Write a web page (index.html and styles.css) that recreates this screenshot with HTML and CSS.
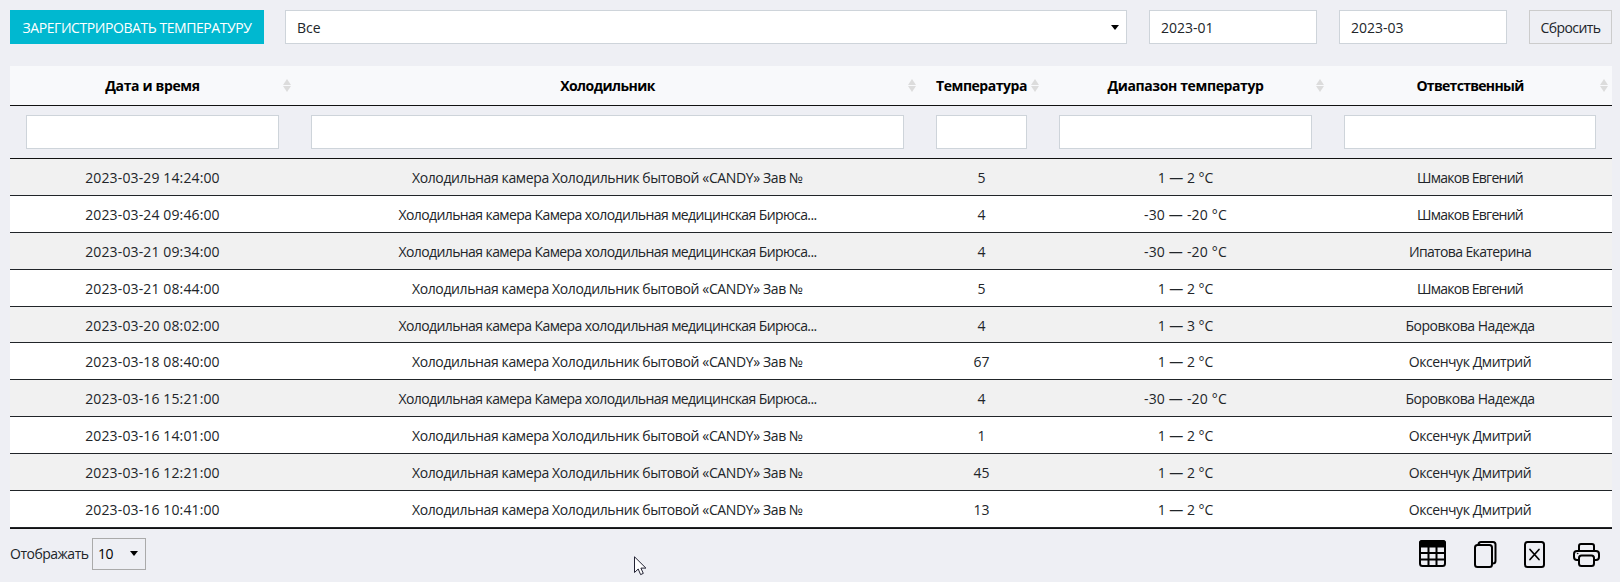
FILE: index.html
```html
<!DOCTYPE html>
<html lang="ru">
<head>
<meta charset="utf-8">
<title>Журнал температуры</title>
<link rel="stylesheet" href="styles.css">
</head>
<body>
<div class="toolbar">
  <button class="register">ЗАРЕГИСТРИРОВАТЬ ТЕМПЕРАТУРУ</button>
  <div class="field fridge">Все<i class="caret"></i></div>
  <div class="field month">2023-01</div>
  <div class="field month">2023-03</div>
  <button class="reset">Сбросить</button>
</div>
<div class="grid head">
  <div class="h-date">Дата и время<i class="sort"></i></div><div class="h-fridge">Холодильник<i class="sort"></i></div><div class="h-temp">Температура<i class="sort"></i></div><div class="h-range">Диапазон температур<i class="sort"></i></div><div class="h-person">Ответственный<i class="sort"></i></div>
</div>
<div class="grid filters"><input><input><input><input><input></div>
<div class="rows" id="rows"></div>
<div class="footer">
  <span class="show">Отображать</span>
  <div class="size">10<i class="caret"></i></div>
  <div class="icons">
    <svg width="28" height="28" viewBox="0 0 28 28"><rect x="1" y="1" width="25" height="25" rx="2.5"/><path d="M1 6.500V3Q1 1 3 1H24Q26 1 26 3V6.500Z" fill="#000"/><path d="M1 13H26M1 19.500H26M9.500 7V26M17.500 7V26"/></svg>
    <svg width="23" height="28" viewBox="0 0 23 28"><rect x="1" y="5" width="17" height="22" rx="2.500"/><path d="M4.500 5V4.500Q4.500 2 7 2H19Q21.500 2 21.500 4.500V21Q21.500 23.500 18.500 23.500"/></svg>
    <svg width="22" height="28" viewBox="0 0 22 28"><rect x="1" y="2" width="19" height="25" rx="2.500"/><path d="M6 9.500L15 19.500M15 9.500L6 19.500" stroke-width="1.700"/></svg>
    <svg width="28" height="28" viewBox="0 0 28 28"><path d="M6 11V6Q6 4 8 4H19Q21 4 21 6V11M6 20H4Q1 20 1 17V14Q1 11 4 11H23Q26 11 26 14V17Q26 20 23 20H21"/><rect x="6" y="15.500" width="15" height="10.500" rx="2.500"/><circle cx="4.500" cy="13.500" r=".3" stroke-width="1"/></svg>
  </div>
</div>
<svg class="cursor" width="14" height="21" viewBox="0 0 14 21"><path d="M.5 .8V16.500L4.200 13L6.600 18.600L9.300 17.400L6.900 12.100H11.900Z"/></svg>
<script src="rows.js"></script>
</body>
</html>
```
FILE: styles.css
```css
* { box-sizing: border-box; }
body {
  margin: 0;
  width: 1620px;
  height: 582px;
  padding: 10px 8px 0 10px;
  overflow: hidden;
  background: #eeeff4;
  color: #212529;
  font: 14px/21px "Open Sans", "Noto Sans", sans-serif;
}
button { font: inherit; padding: 0; white-space: nowrap; }
.toolbar { display: flex; height: 34px; }
.register { width: 254px; background: #00b8d0; color: #fff; border: 0; letter-spacing: -.43px; }
.field { display: flex; align-items: center; justify-content: space-between; padding: 1px 7px 0 11px; background: #fff; border: 1px solid #ced4da; }
.fridge { width: 842px; margin-left: 21px; }
.month { width: 168px; margin-left: 22px; }
.reset { width: 83px; margin-left: 22px; background: #eeeff4; color: #212529; border: 1px solid #ccc; padding-top: 1px; letter-spacing: -.6px; }
.caret { border: 4.5px solid transparent; border-top: 5px solid #000; border-bottom: 0; }
.grid { display: grid; grid-template-columns: 285px 625px 123px 285px 284px; }
.head { margin-top: 22px; height: 40px; background: #f8f9fb; border-bottom: 1px solid #111; color: #000; font-weight: 700; }
.head div { position: relative; text-align: center; padding-top: 9px; white-space: nowrap; }
.h-date { letter-spacing: -.35px; }
.h-fridge { letter-spacing: -.56px; }
.h-temp { letter-spacing: -.47px; }
.h-range { letter-spacing: -.38px; }
.h-person { letter-spacing: -.7px; }
.sort { position: absolute; right: 4px; top: 13px; width: 8px; height: 13px; }
.sort::before, .sort::after { content: ""; display: block; border: 4px solid transparent; }
.sort::before { border-top: 0; border-bottom: 6px solid #dcdcdc; }
.sort::after { margin-top: 1px; border-bottom: 0; border-top: 6px solid #dcdcdc; }
.filters { height: 53px; padding-top: 9px; border-bottom: 1px solid #111; }
.filters input { height: 34px; margin: 0 16px; min-width: 0; background: #fff; border: 1px solid #ced4da; outline: 0; }
.rows { border-bottom: 1px solid #111; }
.row { height: 36.900px; border-bottom: 1px solid #212529; background: #fff; }
.row:nth-child(odd) { background: #f1f1f1; }
.row span { text-align: center; padding-top: 8px; white-space: nowrap; }
.date { letter-spacing: .13px; }
.candy { letter-spacing: -.38px; }
.biryusa { letter-spacing: -.59px; }
.frozen { letter-spacing: .2px; }
.shmakov { letter-spacing: -.72px; }
.ipatova { letter-spacing: -.63px; }
.borovkova { letter-spacing: -.48px; }
.oksenchuk { letter-spacing: -.44px; }
.footer { display: flex; height: 50px; padding-top: 9px; }
.show { padding-top: 5px; width: 82px; white-space: nowrap; letter-spacing: -.5px; }
.size { width: 54px; height: 32px; border: 1px solid #aaa; display: flex; align-items: center; justify-content: space-between; padding: 0 7px 0 5px; color: #000; letter-spacing: -.6px; }
.icons { display: flex; margin: 2px 11px 0 auto; }
.icons svg { fill: none; stroke: #000; stroke-width: 2; stroke-linecap: round; stroke-linejoin: round; }
.icons svg + svg { margin-left: 27px; }
.cursor { position: absolute; left: 634px; top: 556px; fill: #fff; stroke: #223; stroke-width: 1; }
```
FILE: rows.js
```js
const texts = {
  candy: 'Холодильная камера Холодильник бытовой «CANDY» Зав №',
  biryusa: 'Холодильная камера Камера холодильная медицинская Бирюса...',
  cool: '1 — 2 °C',
  mild: '1 — 3 °C',
  frozen: '-30 — -20 °C',
  shmakov: 'Шмаков Евгений',
  ipatova: 'Ипатова Екатерина',
  borovkova: 'Боровкова Надежда',
  oksenchuk: 'Оксенчук Дмитрий'
};
const data = [
  ['2023-03-29 14:24:00', 'candy', '5', 'cool', 'shmakov'],
  ['2023-03-24 09:46:00', 'biryusa', '4', 'frozen', 'shmakov'],
  ['2023-03-21 09:34:00', 'biryusa', '4', 'frozen', 'ipatova'],
  ['2023-03-21 08:44:00', 'candy', '5', 'cool', 'shmakov'],
  ['2023-03-20 08:02:00', 'biryusa', '4', 'mild', 'borovkova'],
  ['2023-03-18 08:40:00', 'candy', '67', 'cool', 'oksenchuk'],
  ['2023-03-16 15:21:00', 'biryusa', '4', 'frozen', 'borovkova'],
  ['2023-03-16 14:01:00', 'candy', '1', 'cool', 'oksenchuk'],
  ['2023-03-16 12:21:00', 'candy', '45', 'cool', 'oksenchuk'],
  ['2023-03-16 10:41:00', 'candy', '13', 'cool', 'oksenchuk']
];
const cell = (name, text) => `<span class="${name}">${text}</span>`;
document.getElementById('rows').innerHTML = data.map(([date, fridge, temp, range, person]) =>
  '<div class="grid row">' + cell('date', date) + cell(fridge, texts[fridge]) + cell('temp', temp) +
  cell(range, texts[range]) + cell(person, texts[person]) + '</div>').join('');
```
